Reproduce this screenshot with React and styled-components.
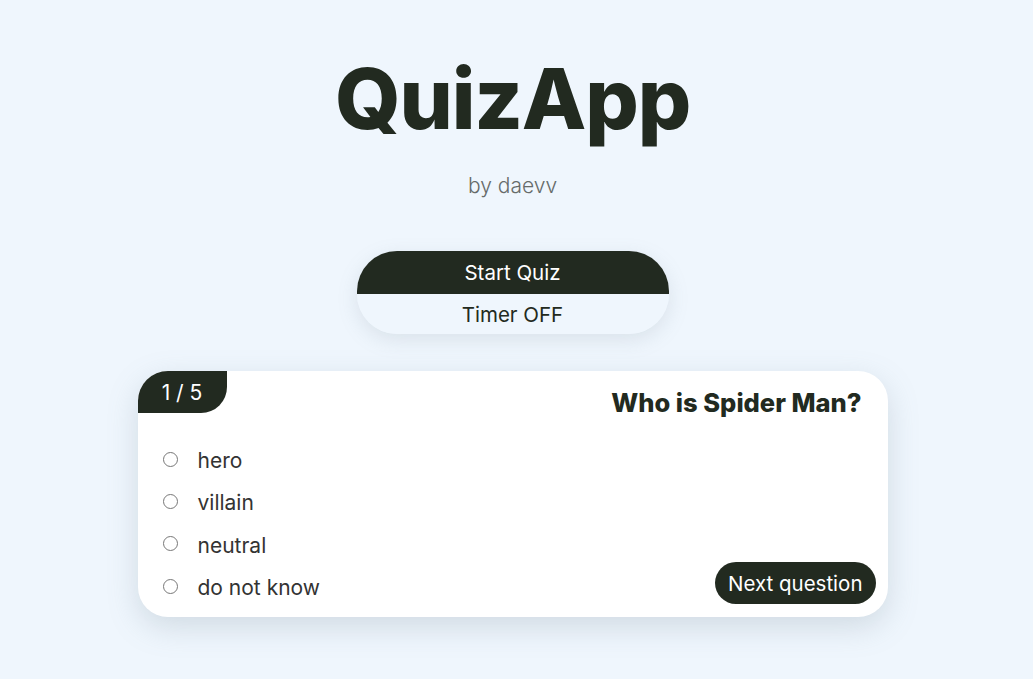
import styled, { createGlobalStyle } from "styled-components";

const GlobalStyle = createGlobalStyle`
  html, body {
    margin: 0;
    padding: 0;
    background: #eff6fd;
    font-family: "Inter", "Noto Sans", sans-serif;
    color: #222a20;
  }
`;

const Page = styled.div`
  display: flex;
  flex-direction: column;
  align-items: center;
  padding: 44px 8px 0 0;
  min-height: 100vh;
  box-sizing: border-box;
`;

const Title = styled.h1`
  margin: 0;
  font-size: 84px;
  font-weight: 800;
  line-height: 110px;
  letter-spacing: -1.2px;
  color: #222a20;
`;

const Byline = styled.p`
  margin: 18px 0 0;
  font-size: 21px;
  font-weight: 300;
  line-height: 28px;
  color: #666b6a;
`;

const Controls = styled.div`
  margin-top: 51px;
  width: 312px;
  border-radius: 40px;
  overflow: hidden;
  box-shadow: 0 6px 20px rgba(120, 140, 150, 0.18);
  display: flex;
  flex-direction: column;
`;

const ControlButton = styled.button`
  border: none;
  height: ${({ $dark }) => ($dark ? "43px" : "40px")};
  background: ${({ $dark }) => ($dark ? "#222a20" : "#eff6fd")};
  color: ${({ $dark }) => ($dark ? "#ffffff" : "#222a20")};
  font-family: inherit;
  font-size: 20.5px;
  cursor: pointer;
`;

const Card = styled.section`
  margin-top: 37px;
  width: 750px;
  height: 246px;
  background: #fff;
  border-radius: 30px;
  overflow: hidden;
  box-shadow: 0 10px 30px rgba(120, 140, 150, 0.25);
  display: flex;
  flex-direction: column;
`;

const CardHeader = styled.div`
  display: flex;
  justify-content: space-between;
  align-items: flex-start;
`;

const Badge = styled.div`
  width: 89px;
  height: 42px;
  background: #222a20;
  color: #fff;
  border-bottom-right-radius: 26px;
  display: flex;
  align-items: center;
  justify-content: center;
  font-size: 21px;
`;

const Question = styled.h2`
  margin: 17px 26px 0 0;
  font-size: 25.5px;
  font-weight: 800;
  line-height: 30px;
`;

const CardBody = styled.div`
  flex: 1;
  display: flex;
  justify-content: space-between;
  align-items: flex-end;
  padding: 0 12px 13px 24px;
`;

const Options = styled.ul`
  list-style: none;
  margin: 0;
  padding: 0 0 1px;
  display: flex;
  flex-direction: column;
  gap: 12.3px;
`;

const Option = styled.li`
  display: flex;
  align-items: center;
  gap: 20px;
  font-size: 21px;
  line-height: 30px;
  color: #333;
`;

const Radio = styled.span`
  width: 13px;
  height: 13px;
  border: 1.5px solid #777;
  border-radius: 50%;
  margin-left: 1px;
  margin-top: -4px;
`;

const NextButton = styled.button`
  border: none;
  height: 42px;
  padding: 0 13px;
  border-radius: 21px;
  background: #222a20;
  color: #fff;
  font-family: inherit;
  font-size: 20.5px;
  cursor: pointer;
`;

const options = ["hero", "villain", "neutral", "do not know"];

export default function App() {
  return (
    <>
      <GlobalStyle />
      <Page>
        <Title>QuizApp</Title>
        <Byline>by daevv</Byline>
        <Controls>
          <ControlButton $dark>Start Quiz</ControlButton>
          <ControlButton>Timer OFF</ControlButton>
        </Controls>
        <Card>
          <CardHeader>
            <Badge>1 / 5</Badge>
            <Question>Who is Spider Man?</Question>
          </CardHeader>
          <CardBody>
            <Options>
              {options.map((o) => (
                <Option key={o}>
                  <Radio />
                  {o}
                </Option>
              ))}
            </Options>
            <NextButton>Next question</NextButton>
          </CardBody>
        </Card>
      </Page>
    </>
  );
}
